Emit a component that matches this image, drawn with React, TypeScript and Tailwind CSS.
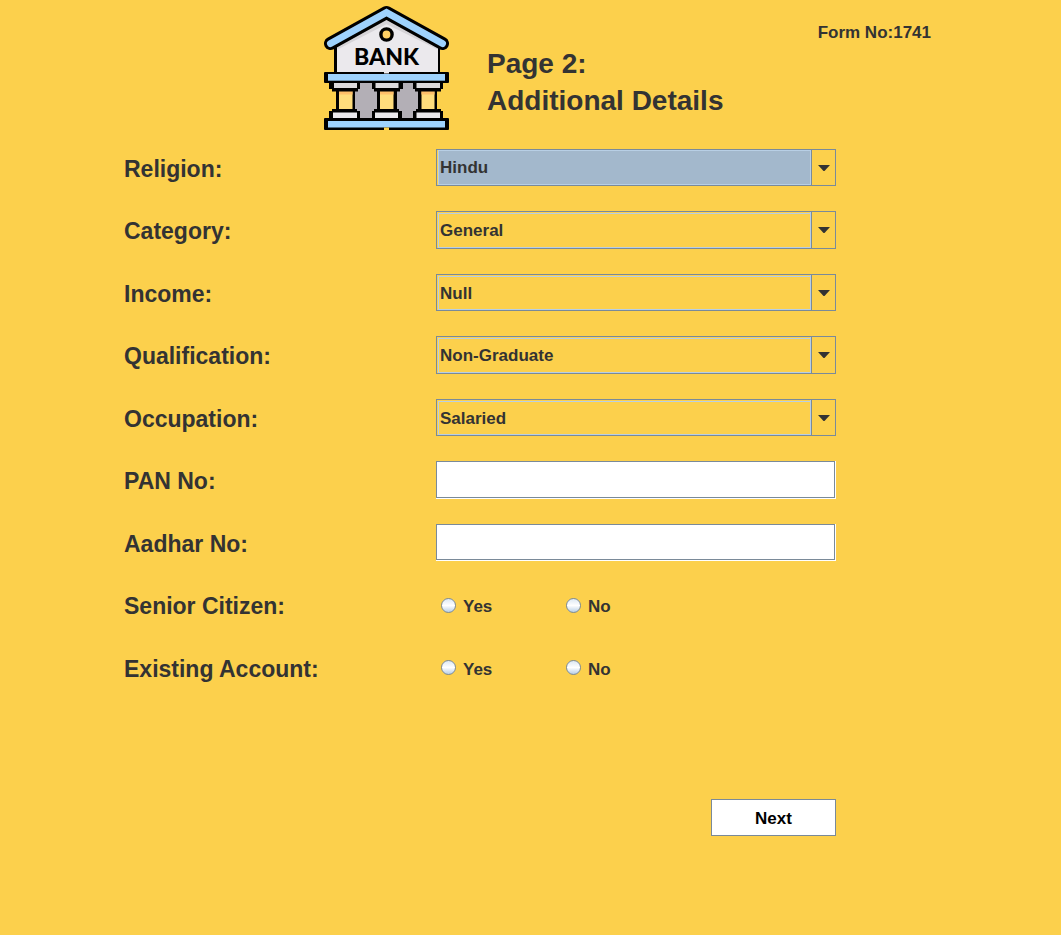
import React from "react";

const selects = [
  { label: "Religion:", id: "religion", options: ["Hindu", "Muslim", "Sikh", "Christian", "Other"], active: true },
  { label: "Category:", id: "category", options: ["General", "OBC", "SC", "ST", "Other"], active: false },
  { label: "Income:", id: "income", options: ["Null", "<1,50,000", "<2,50,000", "5,00,000", "Upto 10,00,000"], active: false },
  { label: "Qualification:", id: "qualification", options: ["Non-Graduate", "Graduate", "Post-Graduate", "Doctrate", "Others"], active: false },
  { label: "Occupation:", id: "occupation", options: ["Salaried", "Self-Employed", "Business", "Student", "Retired"], active: false },
];

const texts = [
  { label: "PAN No:", id: "pan" },
  { label: "Aadhar No:", id: "aadhar" },
];

const radios = [
  { label: "Senior Citizen:", id: "senior" },
  { label: "Existing Account:", id: "existing" },
];

const rowClass = "grid grid-cols-[312px_1fr] items-center odd:h-[37px] even:h-[38px]";
const labelClass = "text-[23px] leading-7 pt-0.5";

function BankLogo() {
  return (
    <svg viewBox="0 0 125 125" className="size-[125px]" role="img" aria-label="Bank">
      {/* gable wall */}
      <path d="M10 36 L62.5 9 L116 36 V68 H10 Z" fill="#000" />
      <path d="M13 36 L62.5 11 L114 36 V67 H13 Z" fill="#ebe9ed" />
      <path d="M13 42.5 L62.5 17 L114 42.5" fill="none" stroke="#d6d4d8" strokeWidth="4" />
      {/* roof */}
      <path d="M6.5 38.5 L62.5 7.5 L118.500 38.5" fill="none" stroke="#000" strokeWidth="13" strokeLinecap="round" strokeLinejoin="round" />
      <path d="M6.5 38.5 L62.5 7.5 L118.500 38.5" fill="none" stroke="#9ed2fd" strokeWidth="7" strokeLinecap="round" />
      <circle cx="62.5" cy="29.5" r="5.6" fill="#ffd064" stroke="#000" strokeWidth="3.4" />
      <text x="62.5" y="60" textAnchor="middle" fontSize="23" fontWeight="900" fill="#000" className="font-['Lato',sans-serif]">
        BANK
      </text>
      {/* interior */}
      <rect x="30" y="78" width="65" height="36" fill="#b3afb6" />
      {/* columns */}
      <path d="M12 85 H31 V106 H12 Z M53 85 H73 V106 H53 Z M94 85 H113 V106 H94 Z" fill="#000" />
      <path d="M15 86 H28.500 V104 H15 Z M56 86 H69.500 V104 H56 Z M97.500 86 H110.500 V104 H97.500 Z" fill="#ffdd7c" />
      <path d="M15 86 H28.500 V89.500 H15 Z M56 86 H69.500 V89.500 H56 Z M97.500 86 H110.500 V89.500 H97.500 Z" fill="#ffc06a" />
      <path d="M5 78 H36 V84 H34 V86.500 H8 V84 H5 Z M48 78 H79 V84 H76 V86.500 H50 V84 H48 Z M89 78 H119 V84 H117 V86.500 H91 V84 H89 Z" fill="#000" />
      <path d="M10 78 H33 V83 H10 Z M51.500 78 H74.500 V83 H51.500 Z M92.500 78 H116 V83 H92.500 Z" fill="#dcdadd" />
      <path d="M8 104 H33 V106 H36 V114 H5 V106 H8 Z M50 104 H75 V106 H78 V114 H48 V106 H50 Z M92 104 H117 V106 H119 V114 H89 V106 H92 Z" fill="#000" />
      <path d="M9 107.500 H33 V113 H9 Z M51 107.500 H74 V113 H51 Z M92.500 107.500 H116 V113 H92.500 Z" fill="#ebe9ed" />
      {/* beams */}
      <rect x="0" y="67" width="125" height="11" rx="1" fill="#000" />
      <rect x="4" y="69" width="117" height="6.700" fill="#9ed2fd" />
      <rect x="0" y="113" width="125" height="12" rx="1" fill="#000" />
      <rect x="4" y="116" width="117" height="6.500" fill="#9ed2fd" />
      <path d="M60 66 H65 V68.500 H60 Z" fill="#ebe9ed" />
      <path d="M60 122.500 H65 V125 H60 Z" fill="#fcd04c" />
    </svg>
  );
}

export default function App() {
  return (
    <main className="min-h-screen bg-[#fcd04c] font-['Liberation_Sans',Arial,sans-serif] font-bold text-[#333333]">
      <header className="flex items-start pt-[5px] pr-[130px] pl-[324px]">
        <BankLogo />
        <h1 className="ml-[38px] flex-1 pt-10 text-[28px] leading-[37px]">
          Page 2:
          <br />
          Additional Details
        </h1>
        <p className="pt-[18px] text-[17px] leading-5">Form No:1741</p>
      </header>

      <form className="pt-[19px] pr-[225px] pl-[124px]" onSubmit={(e) => e.preventDefault()}>
        <div className="grid gap-[25px]">
          {selects.map((s) => (
            <div key={s.id} className={rowClass}>
              <label htmlFor={s.id} className={labelClass}>{s.label}</label>
              <div className={"relative h-full border border-[#7a8a99] pl-px " + (s.active ? "" : "pt-px")}>
                <select
                  id={s.id}
                  className={
                    "block h-full w-full appearance-none border border-[#b8cfe5] pt-px pr-8 pl-px text-[17px] leading-5 outline-none " +
                    (s.active ? "bg-[#a3b8cc]" : "bg-[#fcd04c]")
                  }
                >
                  {s.options.map((o) => (
                    <option key={o}>{o}</option>
                  ))}
                </select>
                <span className="pointer-events-none absolute inset-y-0 right-0 flex w-6 items-center justify-center border-l border-[#7a8a99] bg-[#fcd04c] shadow-[-1px_0_0_#b8cfe5]">
                  <svg viewBox="0 0 12 6" className="h-1.5 w-3" aria-hidden="true">
                    <path d="M0 0 H12 L6.500 6 H5.500 Z" fill="#333333" />
                  </svg>
                </span>
              </div>
            </div>
          ))}

          {texts.map((t) => (
            <div key={t.id} className={rowClass}>
              <label htmlFor={t.id} className={labelClass}>{t.label}</label>
              <div className="h-full bg-white pr-px pb-px">
                <input
                  id={t.id}
                  type="text"
                  className="block h-full w-full border border-[#7a8a99] bg-white px-1 text-[17px] outline-none"
                />
              </div>
            </div>
          ))}

          {radios.map((r) => (
            <fieldset key={r.id} className={rowClass} aria-labelledby={r.id}>
              <span id={r.id} className={labelClass}>{r.label}</span>
              <div className="flex pl-[5px]">
                {["Yes", "No"].map((v) => (
                  <label key={v} className="flex w-[125px] items-center gap-[7px] text-[17px] leading-5">
                    <input
                      type="radio"
                      name={r.id}
                      value={v}
                      className="size-[15px] appearance-none rounded-full border border-[#7a8a99] bg-linear-to-b from-[#dde8f3] via-white to-[#b8cfe5] checked:from-[#333333] checked:via-[#333333] checked:to-[#333333] checked:shadow-[inset_0_0_0_3px_white]"
                    />
                    <span className="pt-1">{v}</span>
                  </label>
                ))}
              </div>
            </fieldset>
          ))}
        </div>

        <div className="mt-[113px] flex justify-end">
          <button type="submit" className="h-[37px] w-[125px] border border-[#7a8a99] bg-white pt-0.5 text-[17px] leading-5 text-black">
            Next
          </button>
        </div>
      </form>
    </main>
  );
}
